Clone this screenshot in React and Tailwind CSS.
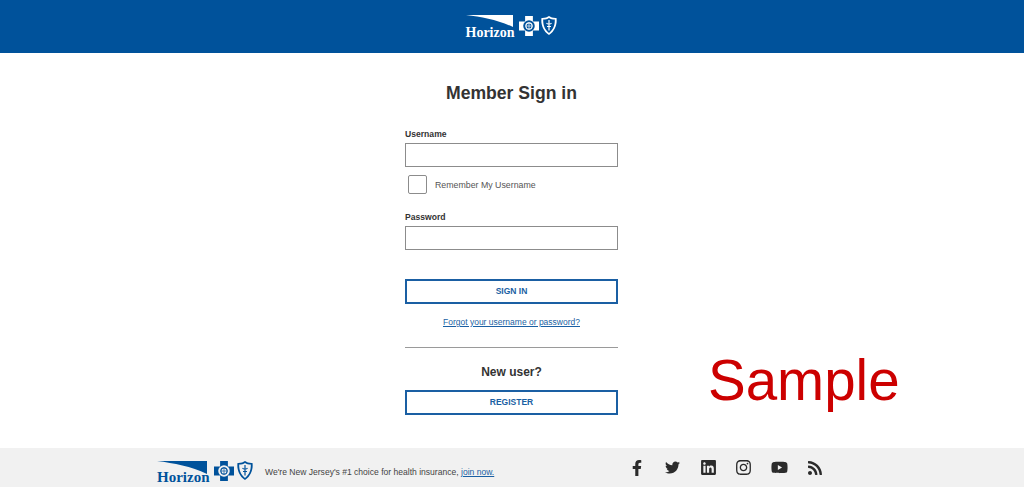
import { FaFacebookF, FaTwitter, FaLinkedin, FaInstagram, FaYoutube, FaRss } from "react-icons/fa";

function Swoosh({ className }) {
  return (
    <svg viewBox="0 0 47 12" className={className} preserveAspectRatio="none">
      <path d="M0 0H47V12C32 5 16 2 0 0Z" fill="currentColor" />
    </svg>
  );
}

// cross with the round seal in the middle
function Cross({ className, seal }) {
  return (
    <svg viewBox="1 1 18 18" className={className}>
      <path d="M6.5 1H13.5V6H19V14H13.5V19H6.5V14H1V6H6.5Z" fill="currentColor" />
      <circle cx="10" cy="10" r="5.2" fill={seal} />
      <circle cx="10" cy="10" r="2.8" fill="none" stroke="currentColor" strokeWidth="1" />
      <path d="M10 6.5V13.5M6.5 10H13.5" stroke="currentColor" strokeWidth="0.6" />
    </svg>
  );
}

function Shield({ className, inner }) {
  return (
    <svg viewBox="0 0 16 20" className={className}>
      <path d="M8 0.5C10 2 12.5 2.6 15.5 2.4C16.3 8 14.5 15 8 19.5C1.5 15 -0.3 8 0.5 2.4C3.5 2.6 6 2 8 0.5Z" fill="currentColor" />
      <path d="M8 2.6C9.6 3.6 11.5 4.1 13.8 4.1C14 9 12.6 14 8 17.4C3.4 14 2 9 2.2 4.1C4.5 4.1 6.4 3.6 8 2.6Z" fill={inner} />
      <path d="M8 4.5V15M5.5 7.5C6.5 9 9.5 9 10.5 7.5M6 11H10" fill="none" stroke="currentColor" strokeWidth="1.2" />
    </svg>
  );
}

const socials = [
  { icon: FaFacebookF, size: 16 },
  { icon: FaTwitter, size: 15 },
  { icon: FaLinkedin, size: 17 },
  { icon: FaInstagram, size: 17 },
  { icon: FaYoutube, size: 17 },
  { icon: FaRss, size: 16 },
];

export default function App() {
  return (
    <div className="relative flex h-[487px] flex-col overflow-hidden bg-white font-['Liberation_Sans',Arial,sans-serif] text-[#333]">
      <header className="flex h-[53px] items-start justify-center bg-[#00529b] pr-[2px] pt-[15px] text-white">
        <div className="flex w-[48px] flex-col">
          <Swoosh className="h-[12px] w-[47px]" />
          <span className="mt-[1px] font-['Liberation_Serif',serif] text-[14px] font-bold leading-[9px]">Horizon</span>
        </div>
        <Cross className="ml-[5px] mt-[1px] h-[20px] w-[20px]" seal="#00529b" />
        <Shield className="ml-[2px] h-[21px] w-[16px]" inner="#00529b" />
      </header>

      <main className="flex flex-1 flex-col items-center pr-[1px]">
        <h1 className="mt-[29px] text-[17.6px] font-bold leading-[22px]">Member Sign in</h1>

        <form className="mt-[24px] flex w-[213px] flex-col">
          <label className="text-[8.6px] font-bold leading-[12px]">Username</label>
          <input className="mt-[3px] h-[24px] border border-[#8c8c8c]" />
          <div className="mt-[8px] flex items-center pl-[3px]">
            <input type="checkbox" className="h-[19px] w-[19px] appearance-none rounded-[2px] border border-[#8c8c8c]" />
            <span className="ml-[8px] text-[8.8px] leading-[12px] text-[#555]">Remember My Username</span>
          </div>

          <label className="mt-[17px] text-[8.6px] font-bold leading-[12px]">Password</label>
          <input type="password" className="mt-[3px] h-[24px] border border-[#8c8c8c]" />

          <button type="button" className="mt-[29px] h-[25px] border-2 border-[#1a5fa3] text-[8.5px] font-bold text-[#1a5fa3]">
            SIGN IN
          </button>
          <a href="#" className="mt-[12px] text-center text-[8.5px] leading-[12px] text-[#1a5fa3] underline">
            Forgot your username or password?
          </a>
          <hr className="mt-[19px] border-t border-[#9a9a9a]" />
          <p className="mt-[16px] text-center text-[12px] font-bold leading-[16px]">New user?</p>
          <button type="button" className="mt-[10px] h-[25px] border-2 border-[#1a5fa3] text-[8.5px] font-bold text-[#1a5fa3]">
            REGISTER
          </button>
        </form>
      </main>

      <footer className="flex h-[39px] items-start bg-[#f1f1f1] pl-[157px] pt-[13px]">
        <div className="flex w-[53px] flex-col text-[#00529b]">
          <Swoosh className="h-[13px] w-[50px]" />
          <span className="-mt-[1px] font-['Liberation_Serif',serif] text-[15px] font-bold leading-[9px]">Horizon</span>
        </div>
        <Cross className="ml-[4px] h-[20px] w-[20px] text-[#00529b]" seal="#f1f1f1" />
        <Shield className="ml-[3px] -mt-[1px] h-[21px] w-[16px] text-[#00529b]" inner="#f1f1f1" />
        <p className="ml-[12px] mt-[5px] text-[8.55px] leading-[12px] text-[#444]">
          We're New Jersey's #1 choice for health insurance, <a href="#" className="text-[#1a5fa3] underline">join now.</a>
        </p>
        <div className="ml-[125px] -mt-[2px] flex items-center">
          {socials.map(({ icon: Icon, size }, i) => (
            <span key={i} className="flex w-[35.6px] justify-center text-[#2b2b2b]">
              <Icon size={size} />
            </span>
          ))}
        </div>
      </footer>

      <div className="absolute left-[708px] top-[348px] text-[56.5px] leading-[66px] text-[#cc0000]">Sample</div>
    </div>
  );
}
